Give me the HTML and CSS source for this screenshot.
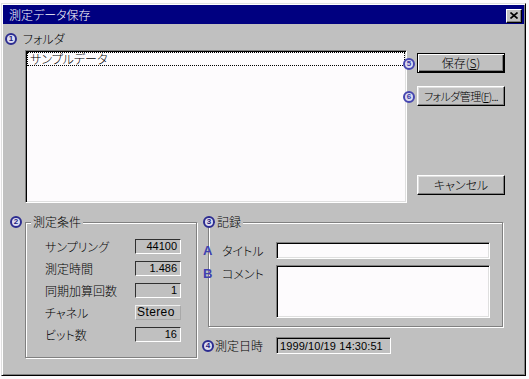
FILE: index.html
```html
<!DOCTYPE html>
<html lang="ja">
<head>
    <meta charset="UTF-8">
    <title>測定データ保存</title>
    <link rel="stylesheet" href="styles.css">
</head>
<body>
    <div class="window">
        <div class="titlebar">
            <span class="title">測定データ保存</span>
            <span class="close">
                <svg width="8" height="7" viewBox="0 0 8 7"><path d="M0.5 0.5 L7.5 6.5 M7.5 0.5 L0.5 6.5" stroke="#000" stroke-width="1.6"/></svg>
            </span>
        </div>

        <div class="content">
            <div class="top">
                <div class="folder">
                    <div class="caption"><span class="mark">1</span>フォルダ</div>
                    <div class="listbox">
                        <div class="item">サンプルデータ</div>
                    </div>
                </div>
                <div class="actions">
                    <div class="action"><span class="mark pin">5</span><button class="btn default">保存(<u>S</u>)</button></div>
                    <div class="action"><span class="mark pin">6</span><button class="btn narrow">フォルダ管理(<u>F</u>)...</button></div>
                    <div class="action cancel"><button class="btn">キャンセル</button></div>
                </div>
            </div>

            <div class="bottom">
                <div class="group cond">
                    <span class="mark side">2</span>
                    <div class="group-title">測定条件</div>
                    <div class="params">
                        <span>サンプリング</span><span class="value">44100</span>
                        <span>測定時間</span><span class="value">1.486</span>
                        <span>同期加算回数</span><span class="value">1</span>
                        <span>チャネル</span><span class="value flat">Stereo</span>
                        <span>ビット数</span><span class="value">16</span>
                    </div>
                </div>

                <div class="record-col">
                    <div class="group record">
                        <span class="mark side">3</span>
                        <div class="group-title">記録</div>
                        <div class="record-rows">
                            <span class="letter">A</span><span>タイトル</span><div class="edit"></div>
                            <span class="letter top-al">B</span><span class="top-al">コメント</span><div class="edit memo"></div>
                        </div>
                    </div>
                    <div class="date-row">
                        <span class="mark">4</span>
                        <span class="date-label">測定日時</span>
                        <span class="date">1999/10/19 14:30:51</span>
                    </div>
                </div>
            </div>
        </div>
    </div>
</body>
</html>
```

FILE: styles.css
```css
body {
    margin: 0;
    background: #fcfafc;
    font-family: "Noto Sans CJK JP", sans-serif;
    font-size: 12px;
    line-height: 14px;
    font-feature-settings: "palt";
    color: #000;
}
.window {
    box-sizing: border-box;
    width: 525px;
    height: 373px;
    margin: 3px 0 0 1px;
    padding: 1px;
    background: #c0c0c0;
    border: 1px solid;
    border-color: #dfdfdf #000 #000 #dfdfdf;
    box-shadow: inset 1px 1px #fff, inset -1px -1px #808080;
}
.titlebar {
    display: flex;
    align-items: center;
    justify-content: space-between;
    height: 19px;
    padding: 0 2px 0 6px;
    background: #000080;
    color: #fff;
}
.title {
    font-weight: 300;
}
.close {
    display: flex;
    align-items: center;
    justify-content: center;
    box-sizing: border-box;
    width: 16px;
    height: 14px;
    margin-top: 2px;
    background: #c0c0c0;
    border: 1px solid;
    border-color: #fff #000 #000 #fff;
    box-shadow: inset -1px -1px #808080;
}
.content {
    padding-top: 8px;
    font-weight: 300;
}

/* 上段: フォルダとボタン */
.top {
    display: flex;
}
.folder {
    display: flex;
    flex-direction: column;
    width: 404px;
}
.caption {
    display: flex;
    align-items: center;
    gap: 6px;
    margin-left: 2px;
    height: 14px;
}
.listbox {
    box-sizing: border-box;
    width: 382px;
    height: 153px;
    margin: 4px 0 0 22px;
    background: #fdfbfd;
    border: 1px solid;
    border-color: #808080 #fff #fff #808080;
    box-shadow: inset 1px 1px #000, inset -1px -1px #dfdfdf;
}
.item {
    margin: 1px 1px 0 1px;
    padding-left: 2px;
    height: 12px;
    line-height: 12px;
    border: 1px dotted #000;
}
.actions {
    margin-left: 10px;
    padding-top: 21px;
}
.action {
    position: relative;
}
.action + .action {
    margin-top: 13px;
}
.action.cancel {
    margin-top: 69px;
}
.btn {
    display: block;
    box-sizing: border-box;
    width: 88px;
    height: 20px;
    padding: 0;
    white-space: nowrap;
    background: #c0c0c0;
    font: inherit;
    font-feature-settings: "palt";
    color: #000;
    border: 1px solid;
    border-color: #fff #000 #000 #fff;
    box-shadow: inset -1px -1px #808080, inset 1px 1px #dfdfdf;
}
.btn.narrow {
    font-size: 11px;
    letter-spacing: -0.6px;
}
.btn.default {
    border-color: #000;
    box-shadow: inset 1px 1px #fff, inset -1px -1px #000, inset -2px -2px #808080;
}
.btn u {
    text-decoration-thickness: 1px;
    text-underline-offset: 1px;
}

/* 丸数字の注釈 */
.mark {
    display: inline-flex;
    align-items: center;
    justify-content: center;
    box-sizing: border-box;
    flex: none;
    width: 12px;
    height: 12px;
    border: 2px solid #2c2c90;
    border-radius: 50%;
    background: #dcdcf0;
    color: #1c1c80;
    font: bold 8px/1 "Liberation Sans", sans-serif;
}
.mark.pin {
    position: absolute;
    left: -14px;
    top: 5px;
    border-color: #4646b0;
    color: #3a3aa8;
}
.mark.side {
    position: absolute;
    top: -7px;
}

/* 下段: グループ */
.bottom {
    display: flex;
    margin-top: 19px;
}
.group {
    position: relative;
    box-sizing: border-box;
    border: 1px solid #808080;
    box-shadow: inset 1px 1px #fff, 1px 1px #fff;
}
.group-title {
    width: fit-content;
    height: 14px;
    margin: -8px 0 0 5px;
    padding: 0 2px;
    background: #c0c0c0;
}
.cond {
    width: 172px;
    height: 136px;
    margin-left: 22px;
}
.cond .mark.side {
    left: -16px;
}
.params {
    display: grid;
    grid-template-columns: 90px 46px;
    grid-auto-rows: 15px;
    row-gap: 7px;
    margin-top: 10px;
    padding-left: 19px;
    line-height: 15px;
}
.value {
    box-sizing: border-box;
    padding-right: 3px;
    text-align: right;
    font: 11px/13px "Liberation Sans", sans-serif;
    border: 1px solid;
    border-color: #303030 #fff #fff #303030;
}
.value.flat {
    padding: 0 0 0 1px;
    text-align: left;
    font-size: 12px;
    letter-spacing: 0.4px;
    border-color: #eee #a8a8a8 #a8a8a8 #eee;
}
.record-col {
    margin-left: 11px;
    width: 295px;
}
.record {
    height: 105px;
}
.record .group-title {
    margin-left: 6px;
}
.record .mark.side {
    left: -6px;
}
.record-rows {
    display: grid;
    grid-template-columns: 19px 54px 214px;
    grid-template-rows: 17px 53px;
    row-gap: 6px;
    align-items: center;
    margin: 13px 0 0 -6px;
}
.letter {
    color: #4040b0;
    font: bold 13px/14px "Liberation Sans", sans-serif;
}
.top-al {
    align-self: start;
    padding-top: 2px;
}
.edit {
    box-sizing: border-box;
    height: 100%;
    background: #fdfbfd;
    border: 1px solid;
    border-color: #808080 #fff #fff #808080;
    box-shadow: inset 1px 1px #000, inset -1px -1px #dfdfdf;
}
.date-row {
    display: flex;
    align-items: center;
    margin: 10px 0 0 -6px;
}
.date-label {
    width: 61px;
    margin-left: 1px;
}
.date {
    box-sizing: border-box;
    width: 115px;
    height: 17px;
    padding: 1px 0 0 3px;
    font: 11px/14px "Liberation Sans", sans-serif;
    letter-spacing: 0.1px;
    border: 1px solid;
    border-color: #808080 #fff #fff #808080;
    box-shadow: inset 1px 1px #000;
}
```
